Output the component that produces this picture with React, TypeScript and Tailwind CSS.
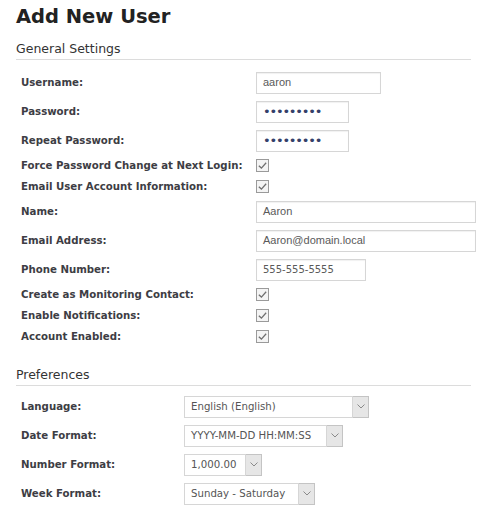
import React from 'react';

const labelCls = "pl-[5px] text-[10.2px] font-bold text-[#3d3d44] [font-family:'DejaVu_Sans',sans-serif]";
const headCls = "w-[455px] border-b border-[#dcdcdc] pb-[2px] text-[12.5px] leading-[16px] text-[#333] [font-family:'DejaVu_Sans',sans-serif]";

const Check = () => (
  <span className="flex h-[13px] w-[13px] items-center justify-center border border-[#9a9a9a] bg-[#f4f4f4]">
    <svg viewBox="0 0 12 12" className="h-[11px] w-[11px]">
      <path d="M2 6.2 L4.8 8.8 L10 3" fill="none" stroke="#6f6f6f" strokeWidth="1.4" />
    </svg>
  </span>
);

const TextInput = ({ value, width, mono }: { value: string; width: string; mono?: boolean }) => (
  <div
    className={`flex h-[22px] items-center border border-[#d6d6d6] px-[6px] text-[#5a5a5a] shadow-[inset_0_1px_1px_rgba(0,0,0,0.06)] ${width} ${
      mono ? "text-[10px] [font-family:'DejaVu_Sans',sans-serif]" : "text-[11px] [font-family:'Liberation_Sans',Arial,sans-serif]"
    }`}
  >
    {value}
  </div>
);

const Dots = () => (
  <div className="flex h-[22px] w-[93px] items-center border border-[#d6d6d6] px-[6px] shadow-[inset_0_1px_1px_rgba(0,0,0,0.06)]">
    <span className="text-[13px] leading-none tracking-[-1.2px] text-[#34406a] [font-family:'DejaVu_Sans',sans-serif]">
      •••••••••
    </span>
  </div>
);

const Select = ({ value, width }: { value: string; width: string }) => (
  <div className={`flex h-[22px] ${width}`}>
    <div className="flex flex-1 items-center border border-[#d6d6d6] px-[6px] text-[10.2px] text-[#555] [font-family:'DejaVu_Sans',sans-serif]">
      {value}
    </div>
    <div className="flex w-[16px] items-center justify-center border border-l-0 border-[#c4c4c4] bg-[#e6e6e6]">
      <svg viewBox="0 0 8 5" className="h-[5px] w-[8px]">
        <path d="M0.5 0.5 L4 4 L7.5 0.5" fill="none" stroke="#8a8a8a" strokeWidth="1" />
      </svg>
    </div>
  </div>
);

const InputRow = ({ label, children, col }: { label: string; children: React.ReactNode; col: string }) => (
  <div className="flex h-[29px] items-center">
    <div className={`${col} ${labelCls}`}>{label}</div>
    {children}
  </div>
);

const CheckRow = ({ label }: { label: string }) => (
  <div className="flex h-[21px] items-center">
    <div className={`w-[240px] ${labelCls}`}>{label}</div>
    <Check />
  </div>
);

export default function App() {
  return (
    <div className="min-h-[524px] w-[486px] bg-white pl-4 pt-[6px]">
      <h1 className="h-[22px] text-[19.5px] font-bold leading-[22px] text-[#222] [font-family:'DejaVu_Sans',sans-serif]">
        Add New User
      </h1>

      <div className={`mt-[13px] ${headCls}`}>General Settings</div>

      <div className="flex flex-col pt-[8px]">
        <InputRow label="Username:" col="w-[240px]">
          <TextInput value="aaron" width="w-[125px]" />
        </InputRow>
        <InputRow label="Password:" col="w-[240px]">
          <Dots />
        </InputRow>
        <InputRow label="Repeat Password:" col="w-[240px]">
          <Dots />
        </InputRow>
        <CheckRow label="Force Password Change at Next Login:" />
        <CheckRow label="Email User Account Information:" />
        <InputRow label="Name:" col="w-[240px]">
          <TextInput value="Aaron" width="w-[220px]" />
        </InputRow>
        <InputRow label="Email Address:" col="w-[240px]">
          <TextInput value="Aaron@domain.local" width="w-[220px]" />
        </InputRow>
        <InputRow label="Phone Number:" col="w-[240px]">
          <TextInput value="555-555-5555" width="w-[110px]" mono />
        </InputRow>
        <CheckRow label="Create as Monitoring Contact:" />
        <CheckRow label="Enable Notifications:" />
        <CheckRow label="Account Enabled:" />
      </div>

      <div className={`mt-[20px] ${headCls}`}>Preferences</div>

      <div className="flex flex-col pt-[6px]">
        <InputRow label="Language:" col="w-[168px]">
          <Select value="English (English)" width="w-[185px]" />
        </InputRow>
        <InputRow label="Date Format:" col="w-[168px]">
          <Select value="YYYY-MM-DD HH:MM:SS" width="w-[159px]" />
        </InputRow>
        <InputRow label="Number Format:" col="w-[168px]">
          <Select value="1,000.00" width="w-[78px]" />
        </InputRow>
        <InputRow label="Week Format:" col="w-[168px]">
          <Select value="Sunday - Saturday" width="w-[131px]" />
        </InputRow>
      </div>
    </div>
  );
}
